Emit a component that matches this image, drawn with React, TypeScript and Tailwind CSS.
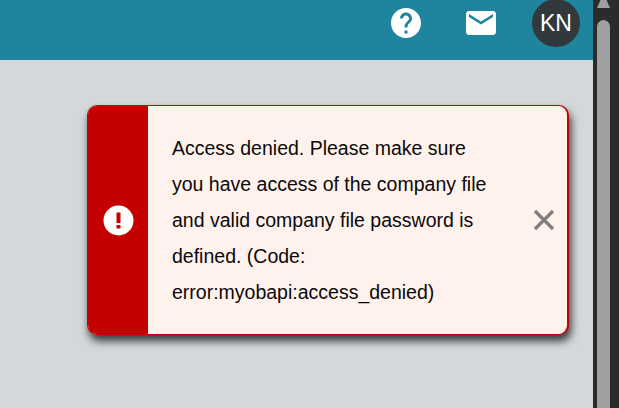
export default function App() {
  return (
    <div className="flex h-[408px] w-[619px] overflow-hidden bg-[#d3d8db] font-['Liberation_Sans',Arial,sans-serif]">
      <div className="flex min-w-0 flex-1 flex-col">
        <header className="flex h-[60px] shrink-0 items-start bg-[#1f849d] pl-[388px]">
          <svg viewBox="0 0 24 24" className="mt-[5px] h-[36px] w-[36px] shrink-0 fill-white">
            <path d="M12 2C6.48 2 2 6.48 2 12s4.48 10 10 10 10-4.48 10-10S17.52 2 12 2zm1 17h-2v-2h2v2zm2.07-7.75l-.9.92C13.45 12.9 13 13.5 13 15h-2v-.5c0-1.1.45-2.1 1.17-2.83l1.24-1.26c.37-.36.59-.86.59-1.41 0-1.1-.9-2-2-2s-2 .9-2 2H8c0-2.21 1.79-4 4-4s4 1.79 4 4c0 .88-.36 1.68-.93 2.25z" />
          </svg>
          <svg viewBox="0 0 24 24" className="ml-[39px] mt-[5px] h-[36px] w-[36px] shrink-0 fill-white">
            <path d="M20 4H4c-1.1 0-1.99.9-1.99 2L2 18c0 1.1.9 2 2 2h16c1.1 0 2-.9 2-2V6c0-1.1-.9-2-2-2zm0 4l-8 5-8-5V6l8 5 8-5v2z" />
          </svg>
          <div className="ml-[33px] -mt-px flex h-[48px] w-[48px] shrink-0 items-center justify-center rounded-full bg-[#32393c] text-[23px] text-white">
            KN
          </div>
        </header>
        <main className="flex flex-1 items-start pl-[87px] pt-[45px]">
          <div className="flex h-[230px] w-[482px] overflow-hidden rounded-[10px] border border-r-2 border-[#c40000] bg-[#fff1ec] shadow-[2px_6px_8px_rgba(0,0,0,0.75)]">
            <div className="flex w-[60px] shrink-0 items-center justify-center bg-[#c40000]">
              <svg viewBox="0 0 31 31" className="h-[31px] w-[31px]">
                <circle cx="15.5" cy="15.5" r="15" fill="#fff" />
                <rect x="13.5" y="7.5" width="4" height="10.5" rx="0.5" fill="#c40000" />
                <rect x="13.5" y="20" width="4" height="3.5" rx="0.5" fill="#c40000" />
              </svg>
            </div>
            <p className="w-[344px] shrink-0 pl-[24px] pt-[24px] text-[19.5px] leading-[36px] text-[#0a0a0a]">
              Access denied. Please make sure you have access of the company file and valid company file password is defined. (Code: error:myobapi:access_denied)
            </p>
            <div className="flex flex-1 items-center justify-end pr-[11px]">
              <svg viewBox="0 0 24 24" className="h-[24px] w-[24px] stroke-[#7f7f7f]" fill="none" strokeWidth="3.2">
                <path d="M3 3 L21 21 M21 3 L3 21" />
              </svg>
            </div>
          </div>
        </main>
      </div>
      <aside className="flex w-[26px] shrink-0 flex-col items-center bg-[#2b2b2b] pl-[1px] pr-[7px]">
        <svg viewBox="0 0 13 8" className="mt-0 h-[8px] w-[13px] fill-[#a0a0a0]">
          <path d="M3.5 0h6l3.5 8H0z" />
        </svg>
        <div className="mt-[12px] h-[388px] w-[13px] rounded-t-[7px] bg-[#a0a0a0]" />
      </aside>
    </div>
  );
}
